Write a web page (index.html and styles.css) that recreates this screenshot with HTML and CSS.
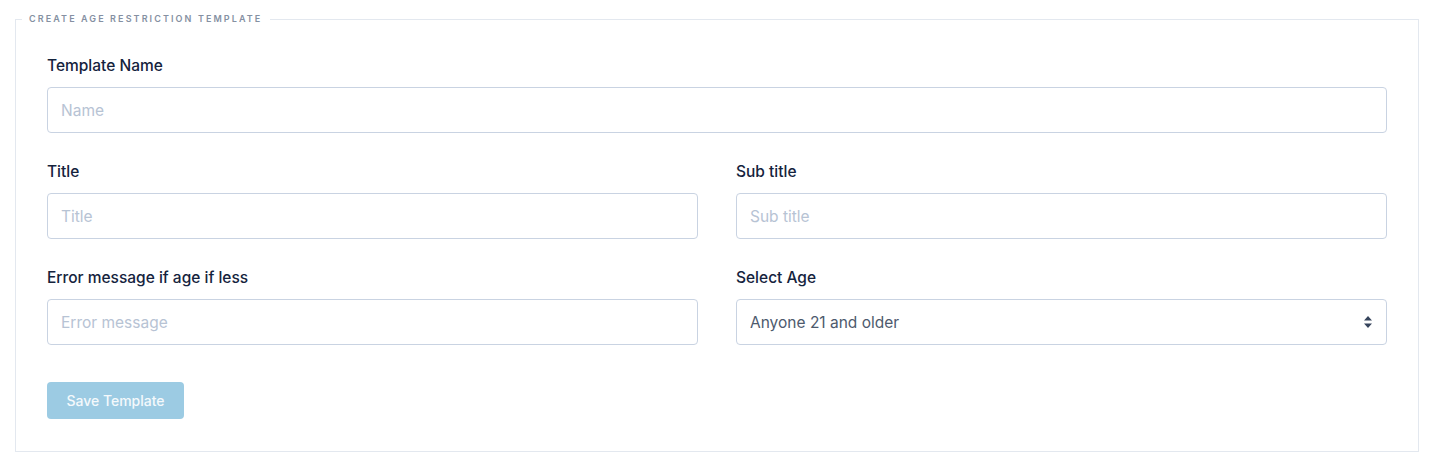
FILE: index.html
```html
<!DOCTYPE html>
<html>
<head>
<meta charset="utf-8">
<link rel="stylesheet" href="styles.css">
</head>
<body>
<form class="page">
  <fieldset class="panel">
    <legend class="panel-title">Create Age Restriction Template</legend>
    <div class="field">
      <label class="label">Template Name</label>
      <input class="input" type="text" placeholder="Name">
    </div>
    <div class="row">
      <div class="field">
        <label class="label">Title</label>
        <input class="input" type="text" placeholder="Title">
      </div>
      <div class="field">
        <label class="label">Sub title</label>
        <input class="input" type="text" placeholder="Sub title">
      </div>
    </div>
    <div class="row">
      <div class="field">
        <label class="label">Error message if age if less</label>
        <input class="input" type="text" placeholder="Error message">
      </div>
      <div class="field">
        <label class="label">Select Age</label>
        <div class="select-wrap">
          <select class="input select">
            <option>Anyone 21 and older</option>
          </select>
          <svg class="select-arrow" width="10" height="14" viewBox="0 0 10 14"><path d="M5 1 L9 5.5 H1 Z M1 8.5 H9 L5 13 Z" fill="#36445c"/></svg>
        </div>
      </div>
    </div>
    <button class="btn" type="button">Save Template</button>
  </fieldset>
</form>
</body>
</html>
```
FILE: styles.css
```css
html, body {
  margin: 0;
  padding: 0;
  background: #ffffff;
}
body {
  font-family: Inter, "Open Sans", sans-serif;
}
.page {
  padding: 13px 11px 0 15px;
}
.panel {
  margin: 0;
  border: 1px solid #e3e8ef;
  padding: 28px 31px 32px;
  min-width: 0;
  display: flex;
  flex-direction: column;
}
.panel-title {
  margin-left: -25px;
  padding: 0 8px 0 7px;
  font-size: 9px;
  line-height: 12px;
  font-weight: 600;
  letter-spacing: 2.1px;
  text-transform: uppercase;
  color: #8590a2;
}
.row {
  display: grid;
  grid-template-columns: 1fr 1fr;
  column-gap: 38px;
}
.field {
  display: flex;
  flex-direction: column;
  margin-bottom: 26px;
}
.label {
  font-size: 15.5px;
  line-height: 25px;
  font-weight: 450;
  color: #15233d;
  margin-bottom: 9px;
}
.input {
  box-sizing: border-box;
  height: 46px;
  width: 100%;
  border: 1px solid #c9d3e2;
  border-radius: 4px;
  padding: 0 13px;
  font-family: Inter, "Open Sans", sans-serif;
  font-size: 15.5px;
  color: #4a5568;
  background: #ffffff;
  outline: none;
}
.input::placeholder {
  color: #b7c3d4;
}
.select-wrap {
  position: relative;
}
.select {
  appearance: none;
  -webkit-appearance: none;
  color: #4d5a6d;
}
.select-arrow {
  position: absolute;
  right: 14px;
  top: 16px;
  pointer-events: none;
}
.btn {
  align-self: flex-start;
  margin-top: 11px;
  width: 137px;
  height: 37px;
  border: none;
  border-radius: 4px;
  background: #9ccbe3;
  color: #f4f9fc;
  font-family: Inter, "Open Sans", sans-serif;
  font-size: 14px;
  font-weight: 450;
}
```
